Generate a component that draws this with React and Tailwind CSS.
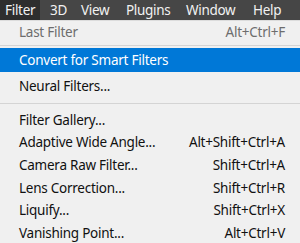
import React from 'react';

const menus = [
  { label: '3D', w: 'w-[31px] ml-[10px]' },
  { label: 'View', w: 'w-[45px]' },
  { label: 'Plugins', w: 'w-[60px]' },
  { label: 'Window', w: 'w-[67px]' },
  { label: 'Help', w: 'w-[40px]' },
];

function Item({ label, shortcut, active, disabled, tall }) {
  return (
    <div
      className={`flex items-center justify-between pl-[19px] pr-[15px] ${tall ? 'h-[24px]' : 'h-[22.6px]'} ${
        active ? 'bg-[#0078d7] text-white' : disabled ? 'text-[#6d6d6d]' : 'text-[#111]'
      }`}
    >
      <span>{label}</span>
      {shortcut && <span>{shortcut}</span>}
    </div>
  );
}

function Sep({ className = '' }) {
  return <div className={`h-px bg-[#d4d4d4] ${className}`} />;
}

export default function App() {
  return (
    <div className="w-[300px] h-[243px] overflow-hidden bg-[#f0f0f0] font-['Noto_Sans',sans-serif] text-[13.5px] tracking-[-0.25px]">
      {/* menu bar */}
      <div className="flex h-5 bg-[#464646] text-[#f2f2f2] text-[13.5px] leading-5 tracking-[-0.3px] whitespace-nowrap">
        <div className="w-[40px] pl-[5px] bg-[#2e2e2e]">Filter</div>
        {menus.map(m => (
          <div key={m.label} className={`shrink-0 ${m.w}`}>{m.label}</div>
        ))}
      </div>
      <div className="h-px bg-[#dcdcdc]" />

      <Item label="Last Filter" shortcut="Alt+Ctrl+F" disabled />
      <Sep className="mt-[1.5px] mb-[2px]" />
      <Item label="Convert for Smart Filters" active tall />
      <div className="h-[3px]" />
      <Item label="Neural Filters..." />
      <Sep className="my-[5px]" />
      <Item label="Filter Gallery..." />
      <Item label="Adaptive Wide Angle..." shortcut="Alt+Shift+Ctrl+A" />
      <Item label="Camera Raw Filter..." shortcut="Shift+Ctrl+A" />
      <Item label="Lens Correction..." shortcut="Shift+Ctrl+R" />
      <Item label="Liquify..." shortcut="Shift+Ctrl+X" />
      <Item label="Vanishing Point..." shortcut="Alt+Ctrl+V" />
    </div>
  );
}
